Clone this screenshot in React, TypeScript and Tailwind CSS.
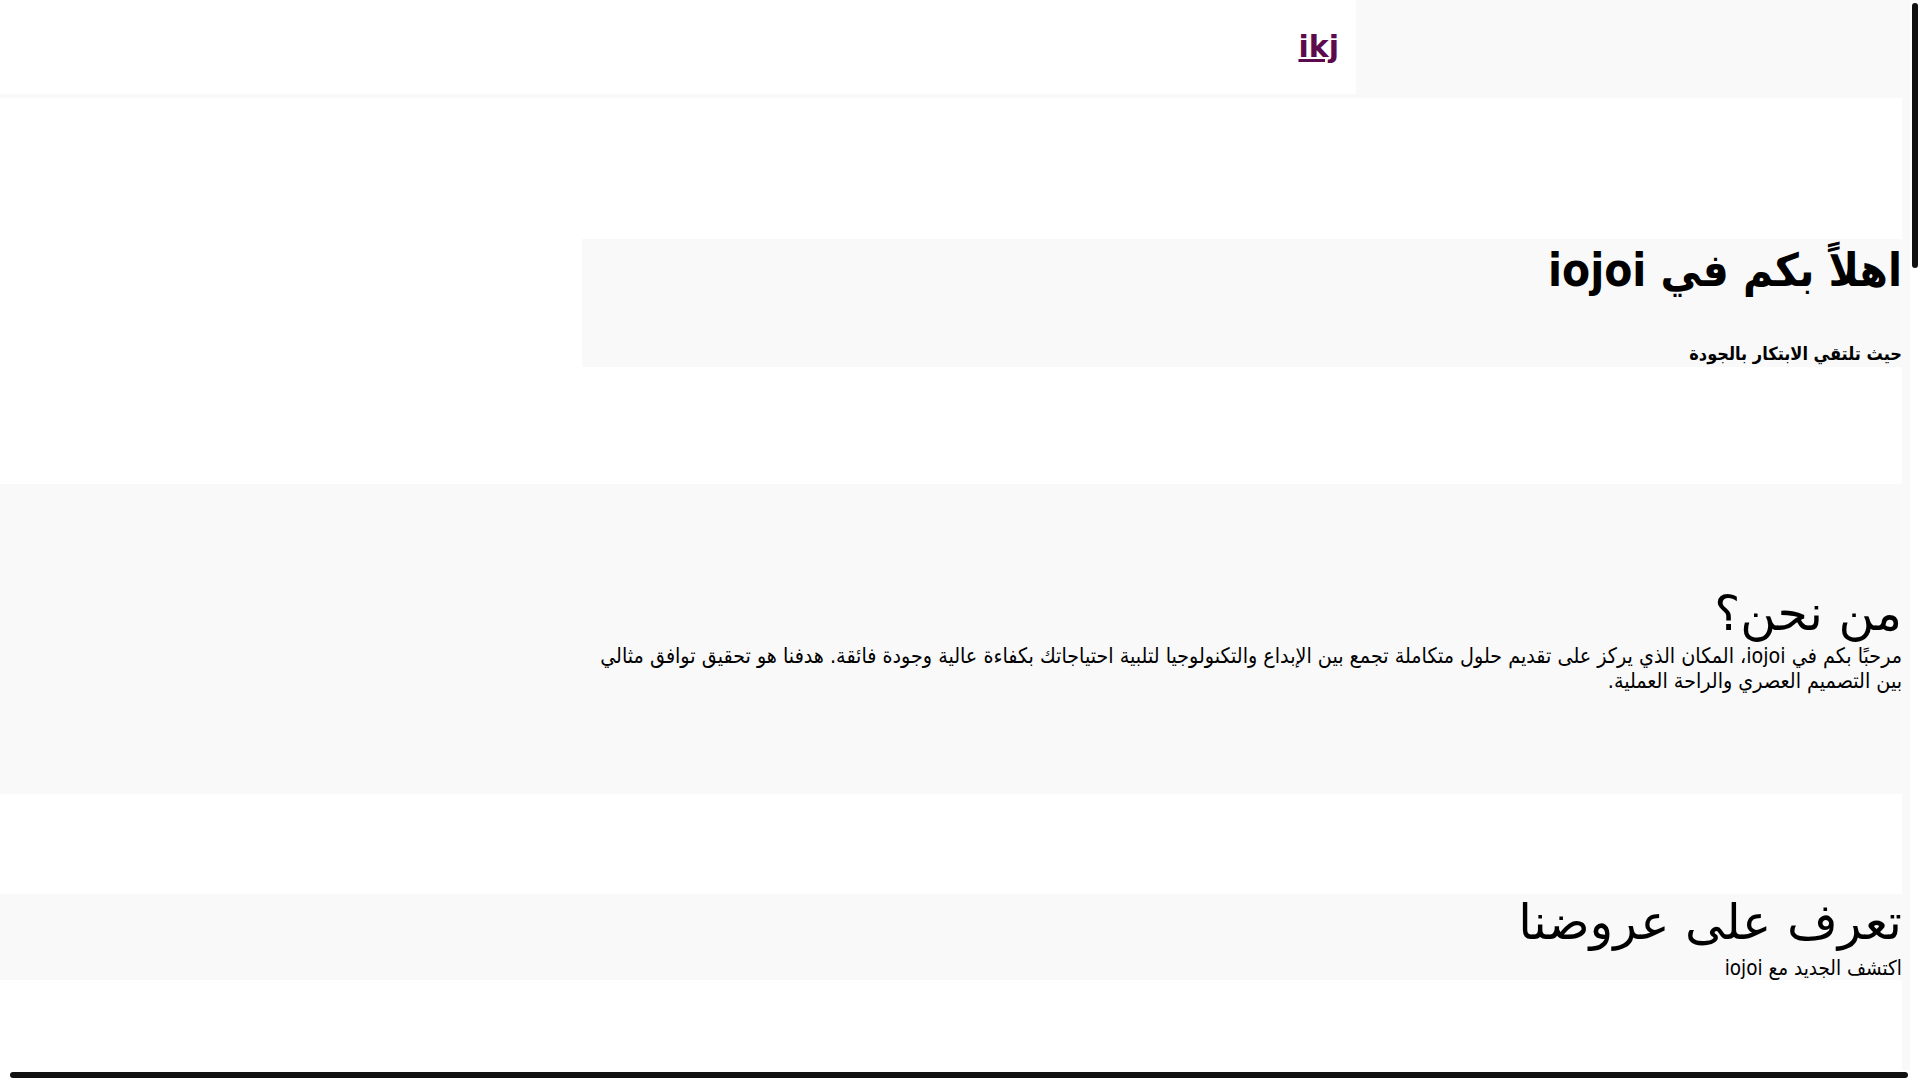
export default function App() {
    return (
        <div className="relative min-h-screen bg-[#f9f9f9]">
            <div dir="rtl" className="w-full font-['DejaVu_Sans',sans-serif] text-black">
                {/* Header */}
                <header className="flex h-[98px] bg-[#f9f9f9]">
                    <div className="w-[564px] shrink-0" />
                    <nav className="flex h-[94px] flex-1 items-center bg-white pr-[17px]">
                        <a href="#" className="text-3xl font-bold leading-none text-[#5c0a4b] underline">
                            ikj
                        </a>
                    </nav>
                </header>

                <main className="pr-[18px]">
                    {/* Hero */}
                    <section className="bg-white pt-[141px] pb-[117px]">
                        <div className="flex h-[128px] w-[1320px] flex-col bg-[#f9f9f9] font-['DejaVu_Sans_Condensed','DejaVu_Sans',sans-serif]">
                            <h1 className="text-[45.5px] font-bold leading-[63px]">اهلاً بكم في iojoi</h1>
                            <p className="mt-auto mb-[3px] text-[18px] font-bold leading-[normal]">حيث تلتقي الابتكار بالجودة</p>
                        </div>
                    </section>

                    {/* About */}
                    <section className="h-[310px] bg-[#f9f9f9] pt-[100px]">
                        <div className="w-[1320px]">
                            <h2 className="text-[49px] leading-[60px]">من نحن؟</h2>
                            <p className="font-['DejaVu_Sans_Condensed','DejaVu_Sans',sans-serif] text-[21.3px] leading-[24.5px]">
                                مرحبًا بكم في iojoi، المكان الذي يركز على تقديم حلول متكاملة تجمع بين الإبداع والتكنولوجيا لتلبية احتياجاتك بكفاءة عالية وجودة فائقة. هدفنا هو تحقيق توافق مثالي بين التصميم العصري والراحة العملية.
                            </p>
                        </div>
                    </section>

                    {/* Offers */}
                    <section className="min-h-[286px] bg-white pt-[100px]">
                        <div className="flex h-[86px] flex-col bg-[#f9f9f9]">
                            <h2 className="text-[49px] leading-[normal]">تعرف على عروضنا</h2>
                            <p className="mt-auto font-['DejaVu_Sans_Condensed','DejaVu_Sans',sans-serif] text-[20.5px] leading-[normal]">
                                اكتشف الجديد مع iojoi
                            </p>
                        </div>
                    </section>
                </main>
            </div>

            {/* scrollbars */}
            <div className="pointer-events-none fixed top-0 right-0 h-screen w-[10px] bg-white pt-[3px]">
                <div className="mx-auto h-[265px] w-[6px] rounded-full bg-[#111111]" />
            </div>
            <div className="pointer-events-none fixed bottom-0 left-0 h-[10px] w-[1910px] bg-white pt-[2px] pl-[10px]">
                <div className="h-[6px] w-[1898px] rounded-full bg-[#111111]" />
            </div>
        </div>
    );
}
